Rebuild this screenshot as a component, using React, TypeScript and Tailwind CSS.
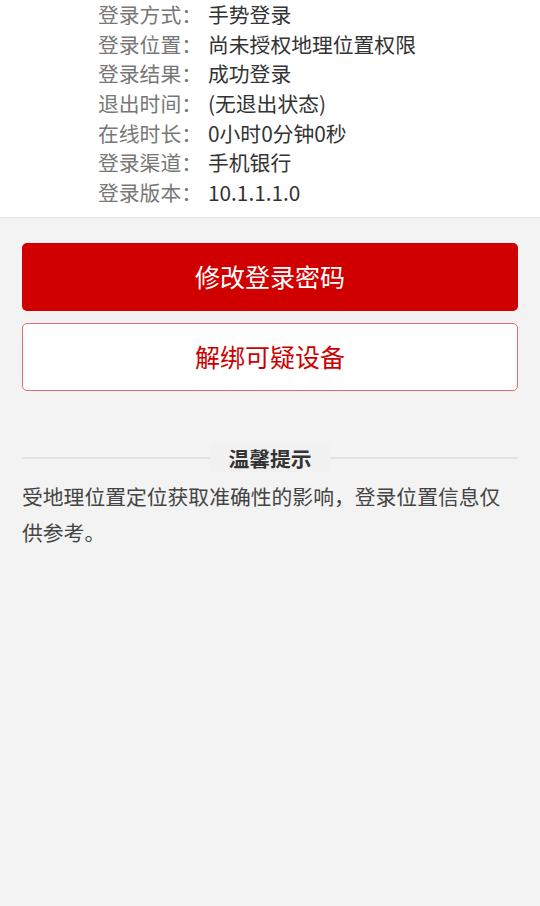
const rows: [string, string][] = [
  ["登录方式", "手势登录"],
  ["登录位置", "尚未授权地理位置权限"],
  ["登录结果", "成功登录"],
  ["退出时间", "(无退出状态)"],
  ["在线时长", "0小时0分钟0秒"],
  ["登录渠道", "手机银行"],
  ["登录版本", "10.1.1.1.0"],
];

export default function App() {
  return (
    <div
      className="min-h-[906px] bg-[#f3f3f3] overflow-hidden"
      style={{ fontFamily: '"Noto Sans CJK SC", "Noto Sans", sans-serif' }}
    >
      {/* 登录详情 */}
      <div className="bg-white border-b border-[#e3e3e3] pl-[98px] pb-[9px]">
        {rows.map(([label, value]) => (
          <div key={label} className="flex text-[20.8px] leading-[29.67px]">
            <span className="w-[110px] shrink-0 text-[#777777]">{label}：</span>
            <span className="text-[#333333]">{value}</span>
          </div>
        ))}
      </div>

      <div className="px-[22px]">
        <button className="mt-[25px] w-full h-[68px] rounded-[5px] bg-[#d00000] text-white text-[25px]">
          修改登录密码
        </button>
        <button className="mt-[12px] w-full h-[68px] rounded-[5px] bg-white border border-[#e07070] text-[#cc0000] text-[25px]">
          解绑可疑设备
        </button>

        {/* 温馨提示 */}
        <div className="mt-[53px] flex items-center">
          <div className="flex-1 h-[2px] bg-[#e2e2e2]" />
          <div className="px-[18px] py-[1px] bg-[#f1f1f1] text-[20.8px] font-bold text-[#333333] leading-[27px]">
            温馨提示
          </div>
          <div className="flex-1 h-[2px] bg-[#e2e2e2]" />
        </div>
        <p className="mt-[5px] text-[20.8px] leading-[36px] text-[#444444]">
          受地理位置定位获取准确性的影响，登录位置信息仅供参考。
        </p>
      </div>
    </div>
  );
}
